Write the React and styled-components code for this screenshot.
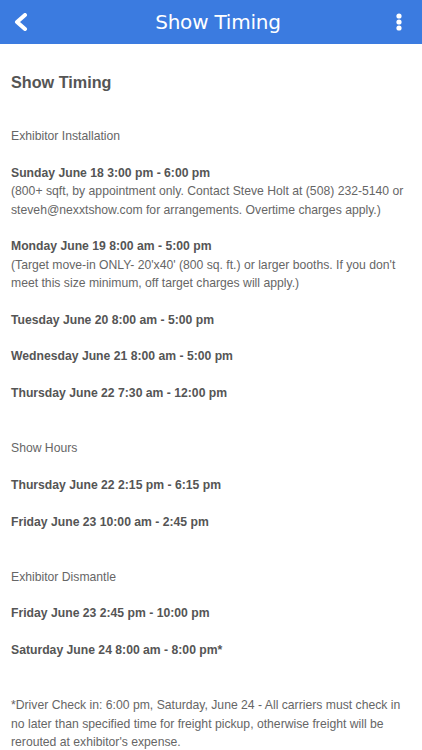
import React from "react";
import styled, { createGlobalStyle } from "styled-components";

const LH = 18.36;

const Global = createGlobalStyle`
  html, body { margin: 0; padding: 0; background: #fff; }
  body { font-family: "Liberation Sans", Arial, sans-serif; }
`;

const Page = styled.div`
  width: 422px;
  min-height: 750px;
  background: #fff;
  overflow: hidden;
`;

const Header = styled.header`
  height: 44px;
  background: #3b7be0;
  display: flex;
  align-items: center;
  justify-content: space-between;
  padding: 0 12px 0 10px;
  box-sizing: border-box;
`;

const IconButton = styled.button`
  width: 22px;
  height: 30px;
  border: 0;
  padding: 0;
  background: transparent;
  display: flex;
  align-items: center;
  justify-content: center;
`;

const Title = styled.h1`
  margin: 0 0 0 16px;
  font-family: "DejaVu Sans", "Open Sans", sans-serif;
  font-weight: normal;
  font-size: 20px;
  color: #fff;
  letter-spacing: -0.2px;
`;

const Body = styled.main`
  padding: 25px 11px 0 11px;
  color: #555;
  font-size: 12.2px;
  line-height: ${LH}px;
`;

const Heading = styled.h2`
  margin: 0;
  font-size: 16.2px;
  font-weight: bold;
  line-height: 26px;
  color: #555;
`;

const Label = styled.p`
  margin: ${(p) => p.$top * LH}px 0 0 0;
  color: #666;
`;

const Entry = styled.div`
  margin-top: ${(p) => p.$top * LH}px;
`;

const Time = styled.div`
  font-weight: bold;
  color: #555;
`;

const Note = styled.div`
  color: #666;
`;

const Footnote = styled.p`
  margin: ${2 * LH}px 0 0 0;
  color: #666;
`;

const Back = () => (
  <svg width="16" height="18" viewBox="0 0 16 18">
    <path d="M12 2 L4 9 L12 16" fill="none" stroke="#fff" strokeWidth="4" strokeLinecap="round" strokeLinejoin="round" />
  </svg>
);

const Kebab = () => (
  <svg width="8" height="18" viewBox="0 0 8 18">
    <circle cx="4" cy="3" r="2.6" fill="#fff" />
    <circle cx="4" cy="9" r="2.6" fill="#fff" />
    <circle cx="4" cy="15" r="2.6" fill="#fff" />
  </svg>
);

const sections = [
  {
    label: "Exhibitor Installation",
    top: 1.75,
    entries: [
      { time: "Sunday June 18 3:00 pm - 6:00 pm", note: "(800+ sqft, by appointment only. Contact Steve Holt at (508) 232-5140 or steveh@nexxtshow.com for arrangements. Overtime charges apply.)" },
      { time: "Monday June 19 8:00 am - 5:00 pm", note: "(Target move-in ONLY- 20'x40' (800 sq. ft.) or larger booths. If you don't meet this size minimum, off target charges will apply.)" },
      { time: "Tuesday June 20 8:00 am - 5:00 pm" },
      { time: "Wednesday June 21 8:00 am - 5:00 pm" },
      { time: "Thursday June 22 7:30 am - 12:00 pm" },
    ],
  },
  {
    label: "Show Hours",
    top: 2,
    entries: [
      { time: "Thursday June 22 2:15 pm - 6:15 pm" },
      { time: "Friday June 23 10:00 am - 2:45 pm" },
    ],
  },
  {
    label: "Exhibitor Dismantle",
    top: 2,
    entries: [
      { time: "Friday June 23 2:45 pm - 10:00 pm" },
      { time: "Saturday June 24 8:00 am - 8:00 pm*" },
    ],
  },
];

export default function App() {
  return (
    <Page>
      <Global />
      <Header>
        <IconButton aria-label="Back"><Back /></IconButton>
        <Title>Show Timing</Title>
        <IconButton aria-label="More"><Kebab /></IconButton>
      </Header>
      <Body>
        <Heading>Show Timing</Heading>
        {sections.map((s) => (
          <section key={s.label}>
            <Label $top={s.top}>{s.label}</Label>
            {s.entries.map((e) => (
              <Entry key={e.time} $top={1}>
                <Time>{e.time}</Time>
                {e.note && <Note>{e.note}</Note>}
              </Entry>
            ))}
          </section>
        ))}
        <Footnote>
          *Driver Check in: 6:00 pm, Saturday, June 24 - All carriers must check in no later than specified time for freight pickup, otherwise freight will be rerouted at exhibitor's expense.
        </Footnote>
      </Body>
    </Page>
  );
}
